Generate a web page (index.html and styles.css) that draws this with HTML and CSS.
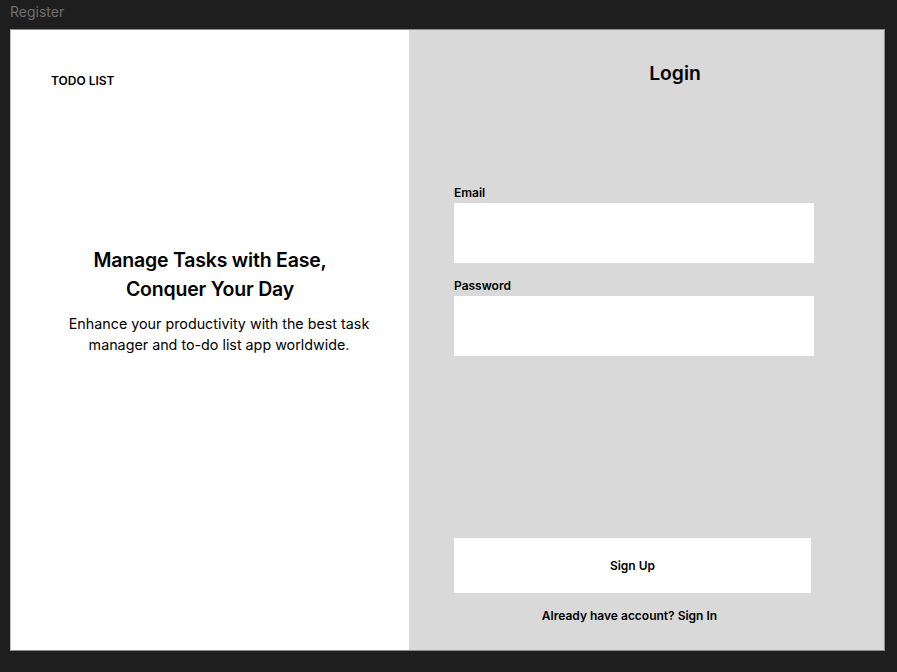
FILE: index.html
```html
<!DOCTYPE html>
<html lang="en">
<head>
<meta charset="utf-8">
<title>Register</title>
<link rel="stylesheet" href="styles.css">
</head>
<body>
<div class="frame-label">Register</div>
<div class="frame">
  <section class="intro">
    <div class="brand">TODO LIST</div>
    <div class="hero">
      <h1 class="hero-title">Manage Tasks with Ease,<br>Conquer Your Day</h1>
      <p class="hero-text">Enhance your productivity with the best task<br>manager and to-do list app worldwide.</p>
    </div>
  </section>
  <section class="auth">
    <h2 class="auth-title">Login</h2>
    <div class="fields">
      <label class="field-label">Email</label>
      <div class="field-input"></div>
      <label class="field-label field-label-2">Password</label>
      <div class="field-input"></div>
    </div>
    <div class="actions">
      <button class="btn">Sign Up</button>
      <div class="switch">Already have account? Sign In</div>
    </div>
  </section>
</div>
</body>
</html>
```

FILE: styles.css
```css
* { box-sizing: border-box; }
html, body { margin: 0; padding: 0; }
body {
  background: #1e1e1e;
  font-family: Inter, "Noto Sans", Arial, sans-serif;
  color: #000;
  width: 897px;
  height: 672px;
  overflow: hidden;
}
.frame-label {
  height: 29px;
  padding: 3px 0 0 10px;
  font-size: 14px;
  line-height: 17px;
  color: #6e6e6e;
}
.frame {
  margin-left: 10px;
  width: 875px;
  height: 622px;
  display: flex;
  border: 1px solid #8c8c8c;
  border-left-color: #bdbdbd;
}
.intro {
  width: 398px;
  background: #fff;
  padding: 44px 0 0 40px;
  display: flex;
  flex-direction: column;
}
.brand {
  font-size: 12px;
  font-weight: 600;
  line-height: 14px;
}
.hero {
  margin-top: 158px;
  margin-left: -40px;
  text-align: center;
}
.hero-title {
  margin: 0;
  font-size: 19.5px;
  font-weight: 600;
  line-height: 29px;
  letter-spacing: -0.2px;
}
.hero-text {
  margin: 9px 0 0;
  padding-left: 18px;
  font-size: 14.3px;
  font-weight: 400;
  line-height: 21px;
}
.auth {
  flex: 1;
  background: #d9d9d9;
  padding: 31px 0 0 45px;
  display: flex;
  flex-direction: column;
}
.auth-title {
  margin: 0;
  width: 360px;
  padding-left: 82px;
  text-align: center;
  font-size: 19.3px;
  font-weight: 600;
  line-height: 24px;
}
.fields {
  margin-top: 101px;
  display: flex;
  flex-direction: column;
  width: 360px;
}
.field-label {
  font-size: 12px;
  font-weight: 600;
  line-height: 14px;
  margin-bottom: 3px;
}
.field-label-2 { margin-top: 16px; }
.field-input {
  height: 60px;
  background: #fff;
}
.actions {
  margin-top: 182px;
  width: 357px;
  display: flex;
  flex-direction: column;
  align-items: center;
}
.btn {
  width: 357px;
  height: 55px;
  border: 0;
  background: #fff;
  font-family: inherit;
  font-size: 12px;
  font-weight: 600;
  color: #000;
  padding: 0;
}
.switch {
  margin-top: 16px;
  font-size: 12px;
  font-weight: 600;
  line-height: 14px;
  margin-left: -6px;
}
```
